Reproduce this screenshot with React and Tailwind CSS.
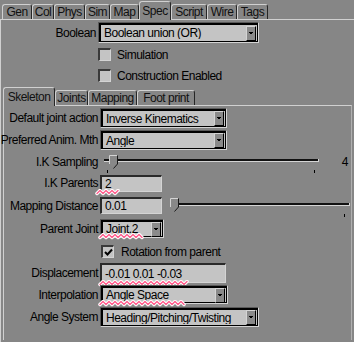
import React from "react";

const FONT = "font-['Liberation_Sans',Arial,sans-serif]";

function Tab({ label, w, selected }) {
  return (
    <div
      className={`${w} ${
        selected ? "h-[19px] -mb-px z-10 bg-[#868686]" : "h-[15px]"
      } relative flex items-center justify-center border-l border-t border-r border-l-[#d0d0d0] border-t-[#d0d0d0] border-r-[#262626] rounded-t-[3px] leading-none text-[#111] whitespace-nowrap`}
    >
      {label}
    </div>
  );
}

function DropBtn() {
  return (
    <div className="w-[10px] h-[15px] mr-[1px] bg-[#8a8a8a] border border-t-[#d4d4d4] border-l-[#d4d4d4] border-r-black border-b-black flex items-center justify-center">
      <svg width="4" height="3" viewBox="0 0 4 3">
        <rect x="0" y="0" width="4" height="1" fill="#000" />
        <rect x="1" y="1" width="2" height="1" fill="#000" />
      </svg>
    </div>
  );
}

function Select({ w, h, text }) {
  return (
    <div
      className={`${w} ${h} border border-t-[#5a5a5a] border-l-[#5a5a5a] border-r-[#d4d4d4] border-b-[#d4d4d4] flex`}
    >
      <div className="flex-1 flex items-center border border-t-2 border-l-2 border-black bg-[#c4c4c4]">
        <div className="flex-1 pl-[3px] leading-none whitespace-nowrap overflow-hidden">{text}</div>
        <DropBtn />
      </div>
    </div>
  );
}

function Input({ w, h, text }) {
  return (
    <div
      className={`${w} ${h} bg-[#c4c4c4] border-t-2 border-l-2 border-t-[#2a2a2a] border-l-[#2a2a2a] border-r border-b border-r-[#d4d4d4] border-b-[#d4d4d4] flex items-center pl-[3px] leading-none whitespace-nowrap`}
    >
      {text}
    </div>
  );
}

function Check({ checked }) {
  return (
    <div className="w-[13px] h-[13px] bg-[#c4c4c4] border-t-2 border-l-2 border-t-[#3a3a3a] border-l-[#3a3a3a] border-r border-b border-r-[#d4d4d4] border-b-[#d4d4d4] flex items-center justify-center">
      {checked && (
        <svg width="9" height="9" viewBox="0 0 9 9">
          <path d="M1 4 L3.5 6.5 L8 1.5" stroke="#000" strokeWidth="2" fill="none" />
        </svg>
      )}
    </div>
  );
}

function Thumb() {
  return (
    <svg width="9" height="14" viewBox="0 0 9 14">
      <path d="M0.5 0.5 H8 V9 L4.5 13 L0.5 9 Z" fill="#888" />
      <path d="M0.5 9 V0.5 H8" stroke="#d4d4d4" fill="none" />
      <path d="M8.5 0.5 V9 L4.5 13.5" stroke="#1a1a1a" fill="none" />
    </svg>
  );
}

function Squiggle({ className, width }) {
  const pts = [];
  for (let x = 0; x <= width; x += 3) {
    pts.push(`${x + 2},${(x / 3) % 2 === 0 ? 4.5 : 1.5}`);
  }
  return (
    <svg className={`absolute pointer-events-none ${className}`} width={width + 4} height="7">
      <polyline points={pts.join(" ")} stroke="#fff" strokeWidth="3.5" fill="none" strokeLinejoin="round" strokeLinecap="round" />
      <polyline points={pts.join(" ")} stroke="#ff5c8c" strokeWidth="1.4" fill="none" strokeLinejoin="round" strokeLinecap="round" />
    </svg>
  );
}

function Label({ children }) {
  return (
    <div className="w-[94px] flex justify-end leading-none">
      <span className="whitespace-nowrap">{children}</span>
    </div>
  );
}

export default function App() {
  return (
    <div className={`w-[354px] h-[342px] bg-[#868686] text-[12px] tracking-[-0.5px] text-black overflow-hidden ${FONT}`}>
      {/* outer tabs */}
      <div className="flex items-end h-[19px] pl-[2px]">
        <Tab label="Gen" w="w-[30px]" />
        <Tab label="Col" w="w-[22px]" />
        <Tab label="Phys" w="w-[31px]" />
        <Tab label="Sim" w="w-[25px]" />
        <Tab label="Map" w="w-[29px]" />
        <Tab label="Spec" w="w-[32px]" selected />
        <Tab label="Script" w="w-[36px]" />
        <Tab label="Wire" w="w-[30px]" />
        <Tab label="Tags" w="w-[31px]" />
      </div>
      <div className="h-[323px] border-t border-l border-[#d0d0d0] flex flex-col">
        <div className="flex items-center gap-[2px] mt-[2px] h-[21px]">
          <div className="w-[95px] text-right leading-none">Boolean</div>
          <Select w="w-[161px]" h="h-[21px]" text="Boolean union (OR)" />
        </div>
        <div className="flex items-center gap-[6px] mt-[5px] ml-[97px] h-[13px]">
          <Check />
          <span className="leading-none">Simulation</span>
        </div>
        <div className="flex items-center gap-[6px] mt-[8px] ml-[97px] h-[13px]">
          <Check />
          <span className="leading-none">Construction Enabled</span>
        </div>

        {/* inner tabs */}
        <div className="flex items-end h-[18px] mt-[5px] pl-[2px]">
          <Tab label="Skeleton" w="w-[52px]" selected />
          <Tab label="Joints" w="w-[33px]" />
          <Tab label="Mapping" w="w-[49px]" />
          <Tab label="Foot print" w="w-[58px]" />
        </div>
        <div className="ml-[2px] mr-[2px] h-[235px] border-t border-l border-[#d0d0d0] border-r border-r-[#b0b0b0] flex flex-col">
          <div className="flex items-center gap-[2px] mt-[2px] h-[20px]">
            <Label>Default joint action</Label>
            <Select w="w-[127px]" h="h-[20px]" text="Inverse Kinematics" />
          </div>
          <div className="flex items-center gap-[2px] mt-[2px] h-[20px]">
            <Label>Preferred Anim. Mth</Label>
            <Select w="w-[127px]" h="h-[20px]" text="Angle" />
          </div>
          <div className="flex items-center gap-[2px] h-[24px]">
            <Label>I.K Sampling</Label>
            <div className="relative w-[216px] h-[24px]">
              <div className="absolute left-[4px] top-[9px] w-[215px] h-[3px] bg-[#111] border-r border-b border-[#d4d4d4]" />
              <div className="absolute left-[9px] top-[5px]">
                <Thumb />
              </div>
              <div className="absolute left-[7px] top-[20px] w-px h-[3px] bg-black" />
              <div className="absolute left-[214px] top-[20px] w-px h-[3px] bg-black" />
            </div>
            <div className="flex-1 text-right pr-[3px] leading-none">4</div>
          </div>
          <div className="flex items-center gap-[2px] h-[18px]">
            <Label>I.K Parents</Label>
            <div className="relative">
              <Input w="w-[62px]" h="h-[17px]" text="2" />
              <Squiggle className="left-[-5px] top-[14px]" width={21} />
            </div>
          </div>
          <div className="flex items-center gap-[2px] mt-[5px] h-[17px]">
            <Label>Mapping Distance</Label>
            <Input w="w-[62px]" h="h-[17px]" text="0.01" />
            <div className="relative flex-1 h-[17px]">
              <div className="absolute left-[13px] top-[6px] w-[173px] h-[3px] bg-[#111] border-r border-b border-[#d4d4d4]" />
              <div className="absolute left-[6px] top-[1px]">
                <Thumb />
              </div>
              <div className="absolute left-[180px] top-[17px] w-px h-[3px] bg-black" />
            </div>
          </div>
          <div className="flex items-center gap-[2px] mt-[5px] h-[19px]">
            <Label>Parent Joint</Label>
            <div className="relative">
              <Select w="w-[64px]" h="h-[19px]" text="Joint.2" />
              <Squiggle className="left-[-2px] top-[14px]" width={42} />
            </div>
          </div>
          <div className="flex items-center gap-[7px] mt-[7px] ml-[97px] h-[13px]">
            <Check checked />
            <span className="leading-none">Rotation from parent</span>
          </div>
          <div className="flex items-center gap-[2px] mt-[5px] h-[20px]">
            <Label>Displacement</Label>
            <div className="relative">
              <Input w="w-[126px]" h="h-[20px]" text="-0.01 0.01 -0.03" />
              <Squiggle className="left-[-2px] top-[17px]" width={87} />
            </div>
          </div>
          <div className="flex items-center gap-[2px] mt-[2px] h-[19px]">
            <Label>Interpolation</Label>
            <div className="relative">
              <Select w="w-[128px]" h="h-[19px]" text="Angle Space" />
              <Squiggle className="left-[-2px] top-[15px]" width={84} />
            </div>
          </div>
          <div className="flex items-center gap-[2px] mt-[3px] h-[20px]">
            <Label>Angle System</Label>
            <Select w="w-[159px]" h="h-[20px]" text="Heading/Pitching/Twisting" />
          </div>
        </div>
      </div>
    </div>
  );
}
